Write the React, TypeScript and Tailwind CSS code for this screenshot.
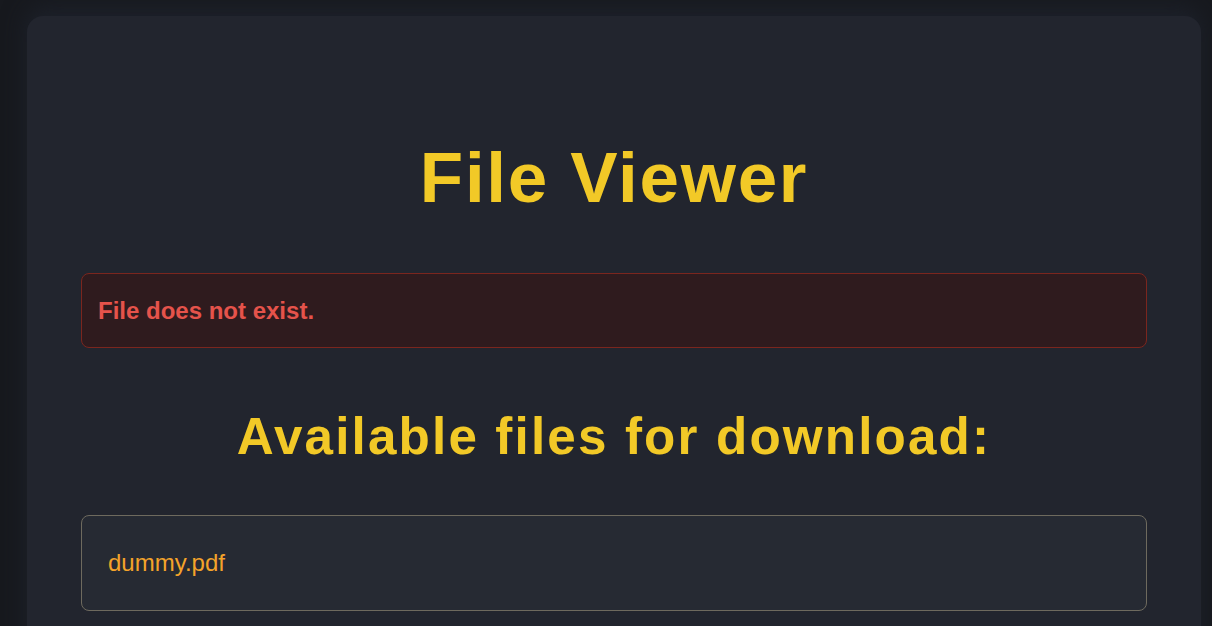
import React from 'react'

const files = ['dummy.pdf']

const App: React.FC = () => {
  return (
    <div className="min-h-screen bg-[#17191e] pt-[16px] font-['Liberation_Sans',Arial,sans-serif]">
      {/* Card */}
      <div className="ml-[27px] w-[1174px] h-[640px] rounded-t-[16px] bg-[#22252e] px-[54px] pt-[126px] shadow-[0_-8px_24px_rgba(30,34,44,0.9)]">
        <h1 className="text-center text-[71px] leading-[71px] font-bold tracking-[1.7px] text-[#f2c927]">
          File Viewer
        </h1>

        {/* Error */}
        <div className="mt-[60px] rounded-[8px] border border-[#7b261e] bg-[#2f1b1e] px-[16px] py-[22px]">
          <p className="text-[24px] leading-[29px] font-bold text-[#e5534b]">File does not exist.</p>
        </div>

        <h2 className="mt-[63px] text-center text-[51.2px] leading-[51px] font-bold tracking-[2.15px] text-[#f2c927]">
          Available files for download:
        </h2>

        <ul className="mt-[53px]">
          {files.map((f) => (
            <li
              key={f}
              className="rounded-[8px] border border-[#6e6a5e] bg-[#262a33] px-[26px] py-[32px]"
            >
              <a href="#" className="text-[24px] leading-[30px] text-[#f4a32a]">
                {f}
              </a>
            </li>
          ))}
        </ul>
      </div>
    </div>
  )
}

export default App
